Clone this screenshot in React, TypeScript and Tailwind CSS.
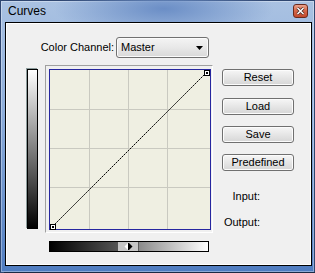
import React from 'react';

const font = "font-['Liberation_Sans',Arial,sans-serif]";

const PushButton: React.FC<{ label: string; className?: string }> = ({ label, className }) => (
  <button
    className={`w-[72px] h-[17px] rounded-[3px] border border-[#707070] bg-[linear-gradient(#f6f6f6,#e6e6e6_50%,#d6d6d6)] shadow-[inset_0_0_0_1px_#fcfcfc] text-[11px] leading-[15px] text-black ${className ?? ''}`}
  >
    {label}
  </button>
);

const CurveGraph: React.FC = () => (
  <svg width="162" height="161" className="block">
    <rect x="0" y="0" width="162" height="161" fill="#efefe2" />
    {[40.5, 79.5, 118.5].map((p) => (
      <g key={p}>
        <line x1={p} y1="1" x2={p} y2="160" stroke="#c9c9c0" />
        <line x1="1" y1={p} x2="161" y2={p} stroke="#c9c9c0" />
      </g>
    ))}
    <rect x="0.5" y="0.5" width="161" height="160" fill="none" stroke="#2626a0" />
    <line x1="3.5" y1="157.5" x2="157.5" y2="3.5" stroke="#000" strokeWidth="1" strokeDasharray="2 0.8" />
    {[
      [1, 155],
      [155, 1],
    ].map(([x, y]) => (
      <g key={x}>
        <rect x={x + 0.5} y={y + 0.5} width="5" height="5" fill="#fff" stroke="#000" />
        <rect x={x + 2} y={y + 2} width="2" height="2" fill="#000" />
      </g>
    ))}
  </svg>
);

export default function App() {
  return (
    <div
      className={`${font} w-[315px] h-[273px] overflow-hidden bg-[linear-gradient(#aac2e2,#8eaedb_40%,#4f7cc0)] shadow-[inset_0_0_0_1px_#2f4670,inset_0_0_0_2px_rgba(255,255,255,0.35)]`}
    >
      {/* title bar */}
      <div className="h-[22px] flex items-center justify-between pl-[8px] pr-[7px] bg-[radial-gradient(ellipse_110px_30px_at_52%_40%,#6b8ec6,rgba(107,142,198,0))]">
        <span className="text-[12px] leading-none text-black">Curves</span>
        <div className="w-[15px] h-[14px] rounded-[3px] border border-[#6b2a1c] bg-[linear-gradient(#eba38d,#d76a4c_45%,#c2482c)] flex items-center justify-center">
          <svg width="9" height="8" viewBox="0 0 9 8">
            <path d="M1.5 1 L7.5 7 M7.5 1 L1.5 7" stroke="#4a2a24" strokeWidth="3" />
            <path d="M1.5 1 L7.5 7 M7.5 1 L1.5 7" stroke="#fff" strokeWidth="1.5" />
          </svg>
        </div>
      </div>

      {/* client area */}
      <div className="ml-[5px] w-[307px] h-[244px] border border-black bg-[#f0f0f0] shadow-[inset_1px_1px_0_#fff,inset_-1px_-1px_0_#fff] text-[11px] text-black">
        <div className="mt-[14px] flex items-center">
          <div className="w-[108px] text-right">Color Channel:</div>
          <div className="ml-[2px] w-[93px] h-[21px] rounded-[3px] border border-[#707070] bg-[linear-gradient(#f4f4f4,#e8e8e8_50%,#d8d8d8)] shadow-[inset_0_0_0_1px_#fbfbfb] flex items-center justify-between pl-[4px] pr-[5px]">
            <span>Master</span>
            <svg width="7" height="4" viewBox="0 0 7 4">
              <polygon points="0,0 7,0 3.5,4" fill="#000" />
            </svg>
          </div>
        </div>

        <div className="mt-[7px] flex items-start">
          <div className="ml-[21px] mt-[4px] w-[11px] h-[160px] border border-black bg-[linear-gradient(#ffffff,#000000)] shadow-[-1px_-1px_0_#8c9c9c]" />

          <div className="ml-[7px] flex flex-col">
            <div className="w-[168px] h-[168px] border border-t-[#a0a0a0] border-l-[#a0a0a0] border-b-white border-r-white pl-[3px] pt-[3px]">
              <CurveGraph />
            </div>
            <div className="relative mt-[8px] ml-[4px] w-[160px] h-[11px] border border-black bg-[linear-gradient(to_right,#000000,#555555_43%,#8a8a8a_56%,#ffffff)]">
              <div className="absolute left-[68px] top-0 w-[21px] h-[9px] bg-[#c6c6c6] border-r border-[#5a5a5a] flex items-center justify-center">
                <svg width="9" height="7" viewBox="0 0 9 7">
                  <polygon points="4,0 4,7 0.5,3.5" fill="#fff" />
                  <line x1="4.5" y1="0" x2="4.5" y2="7" stroke="#000" />
                  <polygon points="5,0 5,7 8.5,3.5" fill="#000" />
                </svg>
              </div>
            </div>
          </div>

          <div className="ml-[9px] mt-[4px] flex flex-col">
            <PushButton label="Reset" />
            <PushButton label="Load" className="mt-[12px]" />
            <PushButton label="Save" className="mt-[11px]" />
            <PushButton label="Predefined" className="mt-[11px]" />
            <div className="mt-[19px] w-[38px] text-right leading-[12px]">Input:</div>
            <div className="mt-[14px] w-[38px] text-right leading-[12px]">Output:</div>
          </div>
        </div>
      </div>
      <div className="mt-[6px] ml-[4px] h-px bg-[#1c2a44]" />
    </div>
  );
}
